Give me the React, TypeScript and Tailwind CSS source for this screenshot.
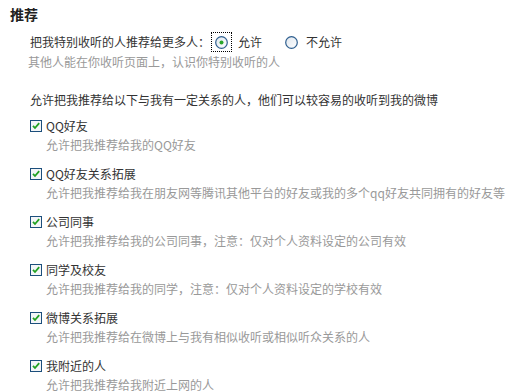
import React from "react";

const items = [
  { label: "QQ好友", desc: "允许把我推荐给我的QQ好友" },
  { label: "QQ好友关系拓展", desc: "允许把我推荐给我在朋友网等腾讯其他平台的好友或我的多个qq好友共同拥有的好友等" },
  { label: "公司同事", desc: "允许把我推荐给我的公司同事，注意：仅对个人资料设定的公司有效" },
  { label: "同学及校友", desc: "允许把我推荐给我的同学，注意：仅对个人资料设定的学校有效" },
  { label: "微博关系拓展", desc: "允许把我推荐给在微博上与我有相似收听或相似听众关系的人" },
  { label: "我附近的人", desc: "允许把我推荐给我附近上网的人" },
];

function Radio({ checked }: { checked?: boolean }) {
  return (
    <svg width="13" height="13" viewBox="0 0 13 13" className="shrink-0">
      <defs>
        <linearGradient id={checked ? "rg1" : "rg2"} x1="0" y1="0" x2="1" y2="1">
          <stop offset="0" stopColor="#dfe6ee" />
          <stop offset="1" stopColor="#ffffff" />
        </linearGradient>
      </defs>
      <circle cx="6.5" cy="6.5" r="5.8" fill={`url(#${checked ? "rg1" : "rg2"})`} stroke="#2f5f8f" strokeWidth="1.2" />
      {checked && <circle cx="6.5" cy="6.5" r="2" fill="#2aa52a" />}
    </svg>
  );
}

function Check() {
  return (
    <svg width="12" height="12" viewBox="0 0 12 12" className="shrink-0">
      <rect x="0.5" y="0.5" width="11" height="11" fill="#f4f6f8" stroke="#1c4f7c" />
      <path d="M3 5.8 L5 8 L9.2 3.2" fill="none" stroke="#21a121" strokeWidth="1.8" />
    </svg>
  );
}

export default function App() {
  return (
    <div
      className="w-[515px] h-[391px] overflow-hidden bg-white text-[12px] text-[#333]"
      style={{ fontFamily: '"Noto Sans CJK SC", "Liberation Sans", sans-serif' }}
    >
      <div className="mt-[4px] pl-[10px] h-[20px] leading-[20px] text-[14px] font-bold text-[#222]">推荐</div>

      <div className="pl-[30px]">
        <div className="mt-[8px] h-[20px] flex items-center">
          <span>把我特别收听的人推荐给更多人：</span>
          <span className="ml-[1px] w-[21px] h-[20px] flex items-center justify-center border border-dotted border-black">
            <Radio checked />
          </span>
          <span className="ml-[6px]">允许</span>
          <span className="ml-[23px]"><Radio /></span>
          <span className="ml-[8px]">不允许</span>
        </div>
        <div className="-ml-[2px] h-[20px] leading-[20px] text-[#999]">其他人能在你收听页面上，认识你特别收听的人</div>

        <div className="mt-[18px] h-[20px] leading-[20px]">允许把我推荐给以下与我有一定关系的人，他们可以较容易的收听到我的微博</div>

        <div className="mt-[6px] flex flex-col gap-[10px]">
          {items.map((it) => (
            <div key={it.label}>
              <div className="h-[20px] flex items-center gap-[4px]">
                <Check />
                <span>{it.label}</span>
              </div>
              <div className="pl-[16px] h-[18px] leading-[18px] text-[#999] whitespace-nowrap">{it.desc}</div>
            </div>
          ))}
        </div>
      </div>
    </div>
  );
}
